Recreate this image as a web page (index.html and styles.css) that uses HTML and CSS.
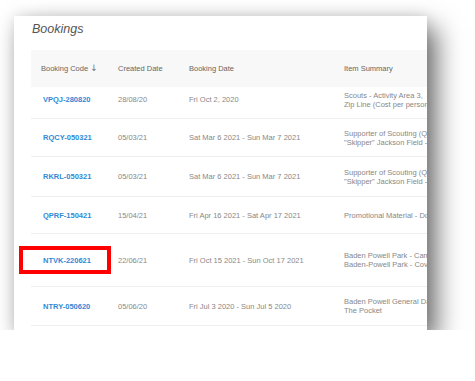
FILE: index.html
```html
<!DOCTYPE html>
<html lang="en">
<head>
    <meta charset="UTF-8">
    <title>Bookings</title>
    <link rel="stylesheet" href="styles.css">
</head>
<body>
    <div class="card">
        <h2 class="card-title">Bookings</h2>
        <div class="bookings">
            <div class="row head">
                <div>Booking Code <span class="sort">↓</span></div>
                <div>Created Date</div>
                <div>Booking Date</div>
                <div>Item Summary</div>
            </div>
            <div class="row">
                <div><a class="code" href="#">VPQJ-280820</a></div>
                <div class="muted">28/08/20</div>
                <div class="muted">Fri Oct 2, 2020</div>
                <div class="muted summary">Scouts - Activity Area 3,<br>Zip Line (Cost per person)</div>
            </div>
            <div class="row">
                <div><a class="code" href="#">RQCY-050321</a></div>
                <div class="muted">05/03/21</div>
                <div class="muted">Sat Mar 6 2021 - Sun Mar 7 2021</div>
                <div class="muted summary">Supporter of Scouting (QLD)<br>"Skipper" Jackson Field - Camping</div>
            </div>
            <div class="row">
                <div><a class="code" href="#">RKRL-050321</a></div>
                <div class="muted">05/03/21</div>
                <div class="muted">Sat Mar 6 2021 - Sun Mar 7 2021</div>
                <div class="muted summary">Supporter of Scouting (QLD)<br>"Skipper" Jackson Field - Camping</div>
            </div>
            <div class="row">
                <div><a class="code" href="#">QPRF-150421</a></div>
                <div class="muted">15/04/21</div>
                <div class="muted">Fri Apr 16 2021 - Sat Apr 17 2021</div>
                <div class="muted summary">Promotional Material - Donation</div>
            </div>
            <div class="row">
                <div class="marked"><a class="code" href="#">NTVK-220621</a><span class="highlight"></span></div>
                <div class="muted">22/06/21</div>
                <div class="muted">Fri Oct 15 2021 - Sun Oct 17 2021</div>
                <div class="muted summary">Baden Powell Park - Camping<br>Baden-Powell Park - Covered Area</div>
            </div>
            <div class="row">
                <div><a class="code" href="#">NTRY-050620</a></div>
                <div class="muted">05/06/20</div>
                <div class="muted">Fri Jul 3 2020 - Sun Jul 5 2020</div>
                <div class="muted summary">Baden Powell General Day Use<br>The Pocket</div>
            </div>
        </div>
    </div>
</body>
</html>
```

FILE: styles.css
```css
body {
    font-family: 'Liberation Sans', Arial, sans-serif;
    margin: 0;
    padding: 16px 0 0 14px;
    background-color: #ffffff;
}
.card {
    width: 413px;
    height: 314px;
    box-sizing: border-box;
    padding: 5px 0 0 17px;
    background-color: #ffffff;
    overflow: hidden;
    box-shadow: 10px 12px 24px rgba(0, 0, 0, 0.55), 0 0 14px rgba(0, 0, 0, 0.12);
}
.card-title {
    margin: 0 0 13px 1px;
    font-size: 12.5px;
    line-height: 16px;
    font-style: italic;
    font-weight: normal;
    color: #555;
}
.bookings {
    width: 560px;
    font-size: 7.5px;
}
.row {
    display: grid;
    grid-template-columns: 77px 71px 155px 257px;
    align-items: center;
    height: 38px;
    box-sizing: border-box;
    border-bottom: 1px solid #eeeeee;
    white-space: nowrap;
}
.row > div {
    padding-left: 10px;
}
.row.head {
    height: 37px;
    background-color: #f8f8f8;
    border-bottom: none;
    color: #666;
}
.row:nth-child(2) {
    height: 32px;
    padding-bottom: 6px;
}
.row:nth-child(4) {
    height: 40px;
}
.row:nth-child(5) {
    height: 37px;
}
.row:nth-child(6) {
    height: 53px;
}
.row:nth-child(7) {
    height: 39px;
}
.sort {
    font-family: 'DejaVu Sans', sans-serif;
    color: #777;
    font-size: 9px;
    line-height: 7px;
}
.code {
    color: #3189d6;
    font-weight: bold;
    text-decoration: none;
    margin-left: 2px;
}
.muted {
    color: #888;
}
.summary {
    line-height: 9px;
}
.marked {
    position: relative;
}
.highlight {
    position: absolute;
    left: -12px;
    top: 50%;
    width: 92px;
    height: 28px;
    margin-top: -14px;
    box-sizing: border-box;
    border: 4px solid #ff0000;
}
```
